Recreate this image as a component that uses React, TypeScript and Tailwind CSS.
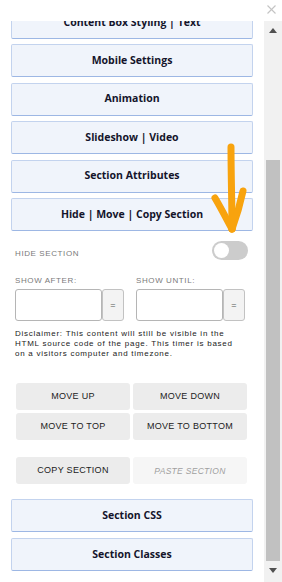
import React from "react";

const SECTIONS_TOP = [
  "Content Box Styling | Text",
  "Mobile Settings",
  "Animation",
  "Slideshow | Video",
  "Section Attributes",
  "Hide | Move | Copy Section",
];

function PanelButton({ label }: { label: string }) {
  return (
    <div className="mx-[11px] flex h-[33px] shrink-0 items-center justify-center rounded-[2px] border border-[#c3d3ee] border-b-[#9db7e4] bg-[#f0f4fb] text-[10.5px] font-bold text-[#14142b] [font-family:'Open_Sans',sans-serif]">
      {label}
    </div>
  );
}

function DateField({ label }: { label: string }) {
  return (
    <div className="flex flex-col">
      <span className="mb-[2px] text-[8px] uppercase tracking-[0.6px] text-[#7a7a7a]">{label}</span>
      <div className="flex">
        <div className="h-[32px] w-[87px] rounded-[3px] border border-[#b5b5b5] bg-white" />
        <div className="flex h-[32px] w-[22px] items-center justify-center rounded-[3px] border border-[#c2c2c2] bg-[#f3f3f3] text-[9px] text-[#555]">
          =
        </div>
      </div>
    </div>
  );
}

function GreyButton({ label, muted }: { label: string; muted?: boolean }) {
  return (
    <div
      className={
        muted
          ? "flex h-[27px] items-center justify-center rounded-[3px] bg-[#f6f6f6] text-[8.5px] uppercase italic tracking-[0.3px] text-[#a0a0a0]"
          : "flex h-[27px] items-center justify-center rounded-[3px] bg-[#ececec] text-[9px] uppercase tracking-[0.3px] text-[#222]"
      }
    >
      {label}
    </div>
  );
}

export default function App() {
  return (
    <div className="relative h-[582px] w-[282px] overflow-hidden bg-white [font-family:'Liberation_Sans',Arial,sans-serif]">
      {/* header with close */}
      <div className="flex h-[21px] justify-end pr-[6px] pt-[5px]">
        <svg width="9" height="9" viewBox="0 0 9 9" stroke="#c4c4c4" strokeWidth="1.1">
          <line x1="0.5" y1="0.5" x2="8.5" y2="8.5" />
          <line x1="8.5" y1="0.5" x2="0.5" y2="8.5" />
        </svg>
      </div>

      <div className="flex h-[561px]">
        {/* scrolled content */}
        <div className="relative flex-1 overflow-hidden">
          <div className="-mt-[15px] flex flex-col gap-[5.4px]">
            {SECTIONS_TOP.map((s) => (
              <PanelButton key={s} label={s} />
            ))}
          </div>

          <div className="px-[15px]">
            <div className="mt-[10.5px] flex items-start justify-between pr-[1px]">
              <span className="mt-[7px] text-[8px] uppercase tracking-[0.6px] text-[#7a7a7a]">Hide Section</span>
              <div className="flex h-[19px] w-[36px] items-center rounded-full bg-[#cccccc] px-[2px]">
                <div className="h-[15px] w-[15px] rounded-full bg-white" />
              </div>
            </div>

            <div className="mt-[15px] flex gap-[12px]">
              <DateField label="Show after:" />
              <DateField label="Show until:" />
            </div>

            <p className="mt-[8px] w-[226px] text-[8px] leading-[10px] tracking-[0.75px] text-[#222]">
              Disclaimer: This content will still be visible in the HTML source code of the page. This timer is based on a visitors computer and timezone.
            </p>

            <div className="mt-[24px] grid grid-cols-2 gap-[3px] pl-px pr-[2px]">
              <GreyButton label="Move up" />
              <GreyButton label="Move down" />
              <GreyButton label="Move to top" />
              <GreyButton label="Move to bottom" />
            </div>

            <div className="mt-[17px] grid grid-cols-2 gap-[3px] pl-px pr-[2px]">
              <GreyButton label="Copy section" />
              <GreyButton label="Paste section" muted />
            </div>
          </div>

          <div className="mt-[15px] flex flex-col gap-[6px]">
            <PanelButton label="Section CSS" />
            <PanelButton label="Section Classes" />
          </div>
        </div>

        {/* scrollbar */}
        <div className="flex w-[18px] flex-col items-center bg-[#f1f1f1]">
          <svg width="8" height="5" viewBox="0 0 8 5" className="mt-[7px]">
            <polygon points="4,0 8,5 0,5" fill="#505050" />
          </svg>
          <div className="mt-[127px] h-[401px] w-[14px] bg-[#c1c1c1]" />
          <svg width="8" height="5" viewBox="0 0 8 5" className="mt-[7px]">
            <polygon points="0,0 8,0 4,5" fill="#505050" />
          </svg>
        </div>
      </div>

      {/* hand-drawn annotation arrow */}
      <svg className="pointer-events-none absolute left-0 top-0" width="282" height="582" viewBox="0 0 282 582">
        <g fill="none" stroke="#f8a30e" strokeWidth="7" strokeLinecap="round" strokeLinejoin="round">
          <path d="M231 147 C231 175 232 205 232 229" />
          <path d="M215 198 C221 208 227 220 232 229" />
          <path d="M243 191 C240 205 236 218 232 229" />
        </g>
      </svg>
    </div>
  );
}
